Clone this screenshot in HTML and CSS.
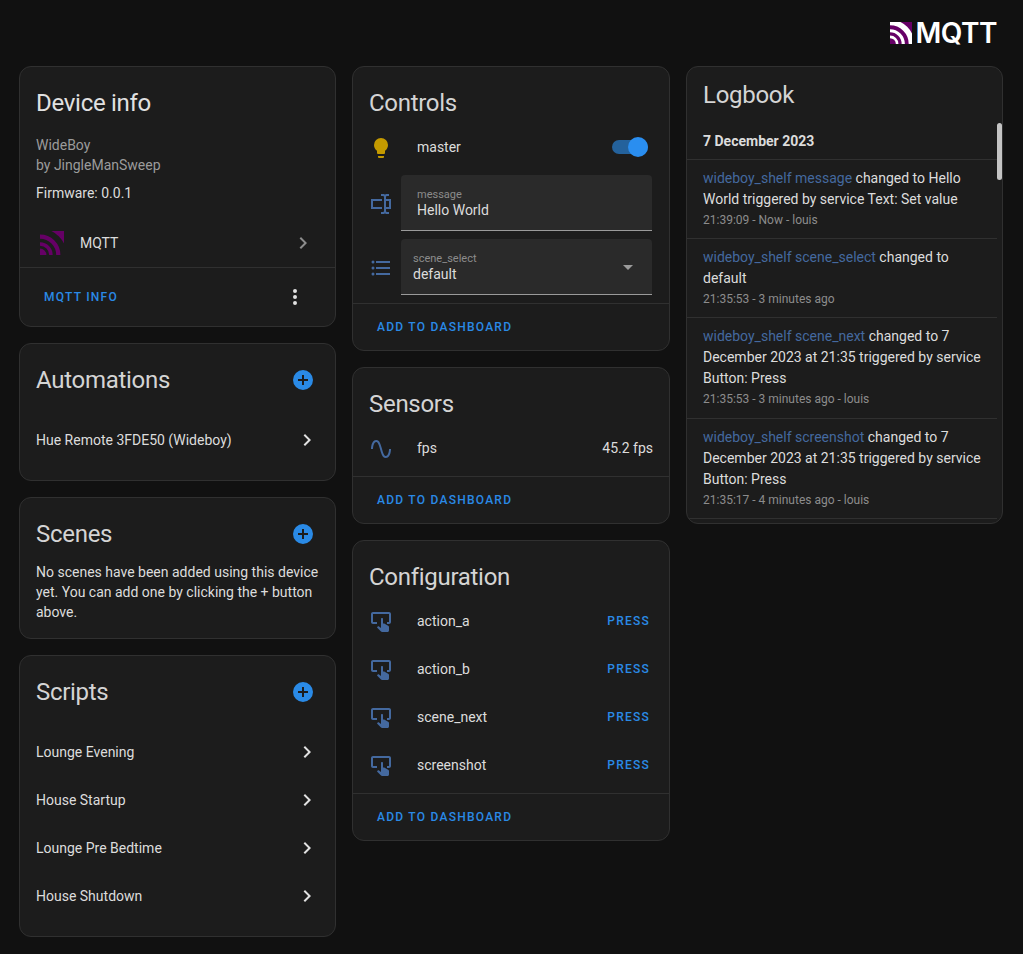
FILE: index.html
```html
<!DOCTYPE html>
<html>
  <head>
    <link rel="stylesheet" href="styles.css">
  </head>

  <body>
    <!-- logo -->
    <div class="topbar">
      <div class="logo">
        <svg class="logo-mark" viewBox="0 0 24 24" preserveAspectRatio="none">
          <rect width="24" height="24" fill="#660066"/>
          <g fill="none" stroke="#fff">
            <circle cx="0" cy="24" r="7.8" stroke-width="2.8"/>
            <circle cx="0" cy="24" r="14.45" stroke-width="3.5"/>
            <circle cx="0" cy="24" r="23.45" stroke-width="6.1"/>
          </g>
        </svg>
        <span class="logo-text">MQTT</span>
      </div>
    </div>

    <div class="columns">
      <!-- left column -->
      <div class="column">
        <div class="card">
          <h2 class="title bright">Device info</h2>
          <div class="device-text">
            <div class="muted">WideBoy</div>
            <div class="muted">by JingleManSweep</div>
            <div class="firmware">Firmware: 0.0.1</div>
          </div>
          <div class="mqtt-row">
            <svg class="mqtt-icon" viewBox="0 0 24 24">
              <rect width="24" height="24" fill="#660066"/>
              <g fill="none" stroke="#1c1c1c">
                <circle cx="0" cy="24" r="7.8" stroke-width="2.8"/>
                <circle cx="0" cy="24" r="14.45" stroke-width="3.5"/>
                <circle cx="0" cy="24" r="23.45" stroke-width="6.1"/>
              </g>
            </svg>
            <span class="mqtt-name">MQTT</span>
            <svg class="chevron dim" viewBox="0 0 24 24"><path d="M8.59,16.58L13.17,12L8.59,7.41L10,6L16,12L10,18L8.59,16.58Z"/></svg>
          </div>
          <div class="actions split">
            <a class="btn">MQTT info</a>
            <svg class="dots" viewBox="0 0 24 24"><path d="M12,16A2,2 0 0,1 14,18A2,2 0 0,1 12,20A2,2 0 0,1 10,18A2,2 0 0,1 12,16M12,10A2,2 0 0,1 14,12A2,2 0 0,1 12,14A2,2 0 0,1 10,12A2,2 0 0,1 12,10M12,4A2,2 0 0,1 14,6A2,2 0 0,1 12,8A2,2 0 0,1 10,6A2,2 0 0,1 12,4Z"/></svg>
          </div>
        </div>

        <div class="card">
          <div class="title-row">
            <h2 class="title">Automations</h2>
            <svg class="plus" viewBox="0 0 24 24"><path d="M17,13H13V17H11V13H7V11H11V7H13V11H17M12,2A10,10 0 0,0 2,12A10,10 0 0,0 12,22A10,10 0 0,0 22,12A10,10 0 0,0 12,2Z"/></svg>
          </div>
          <div class="links">
            <div class="link-row">
              <span>Hue Remote 3FDE50 (Wideboy)</span>
              <svg class="chevron" viewBox="0 0 24 24"><path d="M8.59,16.58L13.17,12L8.59,7.41L10,6L16,12L10,18L8.59,16.58Z"/></svg>
            </div>
          </div>
        </div>

        <div class="card">
          <div class="title-row">
            <h2 class="title">Scenes</h2>
            <svg class="plus" viewBox="0 0 24 24"><path d="M17,13H13V17H11V13H7V11H11V7H13V11H17M12,2A10,10 0 0,0 2,12A10,10 0 0,0 12,22A10,10 0 0,0 22,12A10,10 0 0,0 12,2Z"/></svg>
          </div>
          <p class="note">No scenes have been added using this device yet. You can add one by clicking the + button above.</p>
        </div>

        <div class="card">
          <div class="title-row">
            <h2 class="title">Scripts</h2>
            <svg class="plus" viewBox="0 0 24 24"><path d="M17,13H13V17H11V13H7V11H11V7H13V11H17M12,2A10,10 0 0,0 2,12A10,10 0 0,0 12,22A10,10 0 0,0 22,12A10,10 0 0,0 12,2Z"/></svg>
          </div>
          <div class="links">
            <div class="link-row">
              <span>Lounge Evening</span>
              <svg class="chevron" viewBox="0 0 24 24"><path d="M8.59,16.58L13.17,12L8.59,7.41L10,6L16,12L10,18L8.59,16.58Z"/></svg>
            </div>
            <div class="link-row">
              <span>House Startup</span>
              <svg class="chevron" viewBox="0 0 24 24"><path d="M8.59,16.58L13.17,12L8.59,7.41L10,6L16,12L10,18L8.59,16.58Z"/></svg>
            </div>
            <div class="link-row">
              <span>Lounge Pre Bedtime</span>
              <svg class="chevron" viewBox="0 0 24 24"><path d="M8.59,16.58L13.17,12L8.59,7.41L10,6L16,12L10,18L8.59,16.58Z"/></svg>
            </div>
            <div class="link-row">
              <span>House Shutdown</span>
              <svg class="chevron" viewBox="0 0 24 24"><path d="M8.59,16.58L13.17,12L8.59,7.41L10,6L16,12L10,18L8.59,16.58Z"/></svg>
            </div>
          </div>
        </div>
      </div>

      <!-- middle column -->
      <div class="column">
        <div class="card">
          <h2 class="title">Controls</h2>
          <div class="entities">
            <div class="entity">
              <svg class="state-icon bulb" viewBox="0 0 24 24"><path d="M12,2A7,7 0 0,0 5,9C5,11.38 6.19,13.47 8,14.74V17A1,1 0 0,0 9,18H15A1,1 0 0,0 16,17V14.74C17.81,13.47 19,11.38 19,9A7,7 0 0,0 12,2M9,21A1,1 0 0,0 10,22H14A1,1 0 0,0 15,21V20H9V21Z"/></svg>
              <span class="entity-name">master</span>
              <div class="switch"><div class="knob"></div></div>
            </div>
            <div class="field-row">
              <svg class="state-icon" viewBox="0 0 24 24"><path d="M17,7H22V17H17V19A1,1 0 0,0 18,20H20V22H17.5C16.95,22 16,21.55 16,21C16,21.55 15.05,22 14.5,22H12V20H14A1,1 0 0,0 15,19V5A1,1 0 0,0 14,4H12V2H14.5C15.05,2 16,2.45 16,3C16,2.45 16.95,2 17.5,2H20V4H18A1,1 0 0,0 17,5V7M2,7H13V9H4V15H13V17H2V7M20,15V9H17V15H20Z"/></svg>
              <div class="field text-field">
                <div class="field-label">message</div>
                <div class="field-value">Hello World</div>
              </div>
            </div>
            <div class="field-row">
              <svg class="state-icon" viewBox="0 0 24 24"><path d="M7,5H21V7H7V5M7,13V11H21V13H7M4,4.5A1.5,1.5 0 0,1 5.5,6A1.5,1.5 0 0,1 4,7.5A1.5,1.5 0 0,1 2.5,6A1.5,1.5 0 0,1 4,4.5M4,10.5A1.5,1.5 0 0,1 5.5,12A1.5,1.5 0 0,1 4,13.5A1.5,1.5 0 0,1 2.5,12A1.5,1.5 0 0,1 4,10.5M7,19V17H21V19H7M4,16.5A1.5,1.5 0 0,1 5.5,18A1.5,1.5 0 0,1 4,19.5A1.5,1.5 0 0,1 2.5,18A1.5,1.5 0 0,1 4,16.5Z"/></svg>
              <div class="field select-field">
                <div>
                  <div class="field-label">scene_select</div>
                  <div class="field-value">default</div>
                </div>
                <div class="caret"></div>
              </div>
            </div>
          </div>
          <div class="actions"><a class="btn">Add to dashboard</a></div>
        </div>

        <div class="card">
          <h2 class="title">Sensors</h2>
          <div class="entities">
            <div class="entity">
              <svg class="state-icon" viewBox="0 0 24 24"><path d="M16.5,21C13.5,21 12.31,16.76 11.05,12.28C10.14,9.04 9,5 7.5,5C4.11,5 4,11.93 4,12H2C2,11.63 2.06,3 7.5,3C10.5,3 11.71,7.25 12.97,11.74C13.83,14.8 15,19 16.5,19C19.94,19 20.03,12.07 20.03,12H22.03C22.03,12.37 21.97,21 16.5,21Z"/></svg>
              <span class="entity-name">fps</span>
              <span class="entity-value">45.2 fps</span>
            </div>
          </div>
          <div class="actions"><a class="btn">Add to dashboard</a></div>
        </div>

        <div class="card">
          <h2 class="title">Configuration</h2>
          <div class="entities">
            <div class="entity">
              <svg class="state-icon" viewBox="0 0 24 24"><path d="M20 2H4C2.9 2 2 2.9 2 4V12C2 13.1 2.9 14 4 14H8V12H4V4H20V12H18V14H20C21.1 14 22 13.1 22 12V4C22 2.9 21.1 2 20 2Z M20 20.5C20 21.3 19.3 22 18.500 22H13C12.600 22 12.300 21.900 12 21.600L8 17.400L8.700 16.600C8.900 16.400 9.200 16.300 9.500 16.300H9.700L12 18V9C12 8.400 12.400 8 13 8S14 8.400 14 9V13.500L15.200 13.600L19.100 15.800C19.700 16 20 16.600 20 17.100V20.500Z"/></svg>
              <span class="entity-name">action_a</span>
              <a class="btn press">Press</a>
            </div>
            <div class="entity">
              <svg class="state-icon" viewBox="0 0 24 24"><path d="M20 2H4C2.9 2 2 2.9 2 4V12C2 13.1 2.9 14 4 14H8V12H4V4H20V12H18V14H20C21.1 14 22 13.1 22 12V4C22 2.9 21.1 2 20 2Z M20 20.5C20 21.3 19.3 22 18.500 22H13C12.600 22 12.300 21.900 12 21.600L8 17.400L8.700 16.600C8.900 16.400 9.200 16.300 9.500 16.300H9.700L12 18V9C12 8.400 12.400 8 13 8S14 8.400 14 9V13.500L15.200 13.600L19.100 15.800C19.700 16 20 16.600 20 17.100V20.500Z"/></svg>
              <span class="entity-name">action_b</span>
              <a class="btn press">Press</a>
            </div>
            <div class="entity">
              <svg class="state-icon" viewBox="0 0 24 24"><path d="M20 2H4C2.9 2 2 2.9 2 4V12C2 13.1 2.9 14 4 14H8V12H4V4H20V12H18V14H20C21.1 14 22 13.1 22 12V4C22 2.9 21.1 2 20 2Z M20 20.5C20 21.3 19.3 22 18.500 22H13C12.600 22 12.300 21.900 12 21.600L8 17.400L8.700 16.600C8.900 16.400 9.200 16.300 9.500 16.300H9.700L12 18V9C12 8.400 12.400 8 13 8S14 8.400 14 9V13.500L15.200 13.600L19.100 15.800C19.700 16 20 16.600 20 17.100V20.500Z"/></svg>
              <span class="entity-name">scene_next</span>
              <a class="btn press">Press</a>
            </div>
            <div class="entity">
              <svg class="state-icon" viewBox="0 0 24 24"><path d="M20 2H4C2.9 2 2 2.9 2 4V12C2 13.1 2.9 14 4 14H8V12H4V4H20V12H18V14H20C21.1 14 22 13.1 22 12V4C22 2.9 21.1 2 20 2Z M20 20.5C20 21.3 19.3 22 18.500 22H13C12.600 22 12.300 21.900 12 21.600L8 17.400L8.700 16.600C8.900 16.400 9.200 16.300 9.500 16.300H9.700L12 18V9C12 8.400 12.400 8 13 8S14 8.400 14 9V13.500L15.200 13.600L19.100 15.800C19.700 16 20 16.600 20 17.100V20.500Z"/></svg>
              <span class="entity-name">screenshot</span>
              <a class="btn press">Press</a>
            </div>
          </div>
          <div class="actions"><a class="btn">Add to dashboard</a></div>
        </div>
      </div>

      <!-- right column -->
      <div class="column">
        <div class="card logbook">
          <h2 class="log-title">Logbook</h2>
          <div class="log-body">
            <div class="log-list">
              <div class="log-date">7 December 2023</div>
              <div class="log-entry">
                <div class="log-text"><span class="log-link">wideboy_shelf message</span> changed to Hello World triggered by service Text: Set value</div>
                <div class="log-time">21:39:09 - Now - louis</div>
              </div>
              <div class="log-entry">
                <div class="log-text"><span class="log-link">wideboy_shelf scene_select</span> changed to default</div>
                <div class="log-time">21:35:53 - 3 minutes ago</div>
              </div>
              <div class="log-entry">
                <div class="log-text"><span class="log-link">wideboy_shelf scene_next</span> changed to 7 December 2023 at 21:35 triggered by service Button: Press</div>
                <div class="log-time">21:35:53 - 3 minutes ago - louis</div>
              </div>
              <div class="log-entry">
                <div class="log-text"><span class="log-link">wideboy_shelf screenshot</span> changed to 7 December 2023 at 21:35 triggered by service Button: Press</div>
                <div class="log-time">21:35:17 - 4 minutes ago - louis</div>
              </div>
            </div>
            <div class="scrollbar"><div class="thumb"></div></div>
          </div>
        </div>
      </div>
    </div>
  </body>
</html>
```

FILE: styles.css
```css
* {
  box-sizing: border-box;
}

body {
  margin: 0;
  background: #111111;
  color: #dcdcdc;
  font-family: Roboto, "Liberation Sans", sans-serif;
  font-size: 14px;
  line-height: 20px;
  height: 954px;
  overflow: hidden;
}

.topbar {
  height: 66px;
  padding: 20px 26px 0 0;
  display: flex;
  justify-content: flex-end;
}

.logo {
  display: flex;
  align-items: center;
  gap: 3px;
  height: 26px;
}

.logo-mark {
  width: 22px;
  height: 22px;
}

.logo-text {
  font-family: Inter, sans-serif;
  font-weight: 600;
  font-size: 28px;
  line-height: 26px;
  letter-spacing: -0.5px;
  color: #ffffff;
}

.columns {
  display: grid;
  grid-template-columns: 317px 318px 317px;
  gap: 16px;
  padding-left: 19px;
  align-items: start;
}

.column {
  display: flex;
  flex-direction: column;
  gap: 16px;
}

.card {
  background: #1c1c1c;
  border: 1px solid #303030;
  border-radius: 12px;
}

.title {
  margin: 0;
  padding: 20px 16px 0;
  font-size: 24px;
  font-weight: 400;
  line-height: 32px;
  letter-spacing: -0.29px;
  color: #d4d4d4;
}

.title.bright {
  color: #e1e1e1;
}

.title-row {
  display: flex;
  justify-content: space-between;
  align-items: flex-start;
}

.plus {
  width: 24px;
  height: 24px;
  margin: 24px 20px 0 0;
  fill: #2a8ae6;
}

/* device info */
.device-text {
  padding: 16px 16px 0;
  height: 100px;
}

.muted {
  color: #9b9b9b;
}

.firmware {
  margin-top: 8px;
}

.mqtt-row {
  height: 48px;
  display: flex;
  align-items: center;
  padding: 0 20px;
}

.mqtt-icon {
  width: 24px;
  height: 24px;
}

.mqtt-name {
  margin-left: 16px;
  flex: 1;
}

.chevron {
  width: 24px;
  height: 24px;
  fill: #e1e1e1;
}

.chevron.dim {
  fill: #8c8c8c;
}

.actions {
  border-top: 1px solid #303030;
  height: 47px;
  padding: 0 24px;
  display: flex;
  align-items: center;
}

.actions.split {
  justify-content: space-between;
  height: 59px;
}

.dots {
  width: 24px;
  height: 24px;
  fill: #e1e1e1;
  margin-right: 4px;
}

.btn {
  color: #2a8ae6;
  font-size: 12px;
  font-weight: 500;
  letter-spacing: 1.25px;
  text-transform: uppercase;
}

/* link lists */
.links {
  padding: 20px 16px 16px;
}

.link-row {
  height: 48px;
  display: flex;
  justify-content: space-between;
  align-items: center;
}

.note {
  margin: 0;
  padding: 12px 16px 16px;
}

/* entity rows */
.entities {
  padding: 4px 16px;
}

.entity {
  height: 48px;
  display: flex;
  align-items: center;
}

.state-icon {
  width: 24px;
  height: 24px;
  margin-top: 2px;
  fill: #44699f;
  flex: none;
}

.bulb {
  fill: #c49a00;
}

.entity-name {
  margin-left: 24px;
  flex: 1;
}

.switch {
  width: 36px;
  height: 14px;
  border-radius: 7px;
  background: #24629c;
  margin-right: 5px;
  display: flex;
  align-items: center;
  justify-content: flex-end;
}

.knob {
  width: 20px;
  height: 20px;
  border-radius: 50%;
  background: #2a8ef0;
}

.field-row {
  display: flex;
  align-items: center;
  gap: 8px;
  height: 64px;
  padding-right: 1px;
}

.field {
  flex: 1;
  height: 56px;
  background: #2a2a2a;
  border-bottom: 1px solid #9a9a9a;
  border-radius: 4px 4px 0 0;
}

.text-field {
  padding: 13px 16px 0;
}

.select-field {
  padding: 13px 19px 0 12px;
  display: flex;
  justify-content: space-between;
}

.field-label {
  font-size: 11px;
  line-height: 14px;
  color: #8c8c8c;
}

.field-value {
  line-height: 20px;
  margin-top: -2px;
}

.caret {
  width: 0;
  height: 0;
  margin-top: 13px;
  border-left: 5px solid transparent;
  border-right: 5px solid transparent;
  border-top: 5px solid #9b9b9b;
}

.press {
  margin-right: 3px;
}

/* logbook */
.logbook {
  height: 458px;
  overflow: hidden;
}

.log-title {
  margin: 0;
  padding: 12px 16px 0;
  font-size: 24px;
  font-weight: 400;
  line-height: 32px;
  letter-spacing: -0.29px;
  color: #d4d4d4;
  height: 56px;
}

.log-body {
  display: flex;
  height: 400px;
}

.log-list {
  flex: 1;
  min-width: 0;
}

.log-date {
  height: 37px;
  padding: 8px 16px 0;
  font-weight: 700;
  border-bottom: 1px solid #303030;
  margin-right: -5px;
}

.log-entry {
  padding: 8px 8px 8.2px 16px;
  border-bottom: 1px solid #303030;
}

.log-text {
  line-height: 21px;
}

.log-link {
  color: #44699f;
}

.log-time {
  font-size: 12px;
  line-height: 20px;
  color: #8c8c8c;
}

.scrollbar {
  width: 5px;
  flex: none;
}

.thumb {
  height: 57px;
  border-radius: 3px;
  background: #c4c4c4;
}
```
